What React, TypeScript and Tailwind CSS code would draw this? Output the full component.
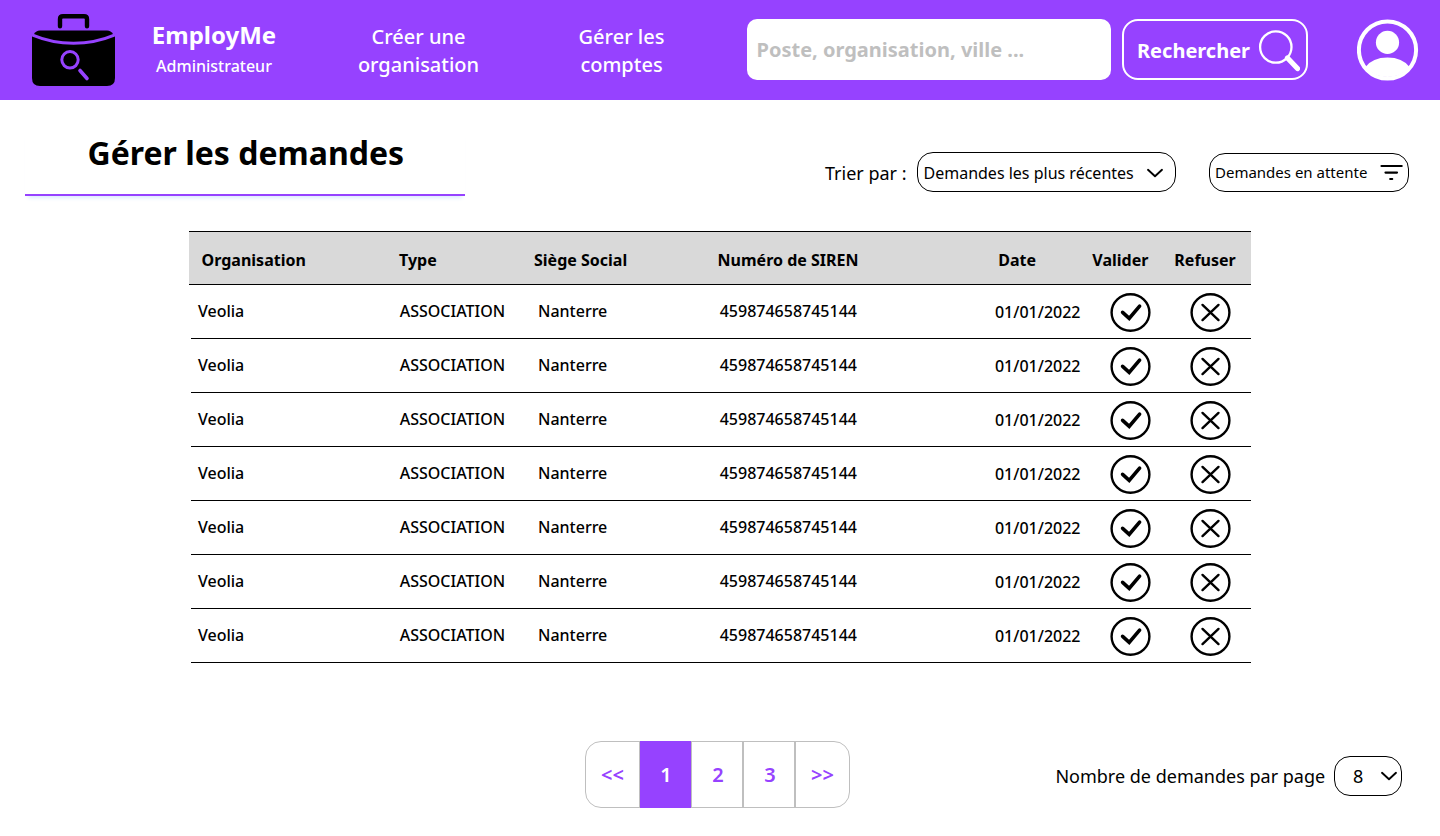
import React from "react";

const requests = Array.from({ length: 7 }, (_, id) => ({
  id,
  name: "Veolia",
  type: "ASSOCIATION",
  city: "Nanterre",
  siren: "459874658745144",
  date: "01/01/2022",
}));

function BriefcaseLogo() {
  return (
    <svg width="84" height="74" viewBox="0 0 84 74" fill="none">
      <path d="M28 13.2V6Q28 3.2 31 3.2H52Q55 3.2 55 6V13.2" stroke="#000" strokeWidth="4.4" strokeLinecap="round" />
      <path d="M2 21Q4 17.5 8 17.5H75Q79 17.5 81 21Q63 28.7 41.5 28.7Q20 28.7 2 21Z" fill="#000" />
      <path d="M0 23.5Q20 31.8 41.5 31.8Q63 31.8 83 23.5V65Q83 73 75 73H8Q0 73 0 65Z" fill="#000" />
      <circle cx="38" cy="46.8" r="8.2" stroke="#9642ff" strokeWidth="3" />
      <path d="M48 57.5L55 65.5" stroke="#9642ff" strokeWidth="3.6" strokeLinecap="round" />
    </svg>
  );
}

function SearchIcon() {
  return (
    <svg width="44" height="44" viewBox="0 0 44 44" fill="none" stroke="#fff">
      <circle cx="19.8" cy="19" r="15.7" strokeWidth="2.3" />
      <path d="M32 30.5L42 41" strokeWidth="5.2" strokeLinecap="round" transform="translate(-0.5 -0.5)" />
    </svg>
  );
}

function AvatarIcon() {
  return (
    <svg width="62" height="62" viewBox="0 0 62 62" fill="none">
      <circle cx="30.5" cy="31" r="28.6" stroke="#fff" strokeWidth="4" />
      <circle cx="30.5" cy="23.4" r="11.6" fill="#fff" />
      <path d="M8.5 48Q15.5 38.5 30.5 38.5Q45.5 38.5 52.5 48A29 29 0 0 1 8.5 48Z" fill="#fff" />
    </svg>
  );
}

function Chevron() {
  return (
    <svg width="18" height="12" viewBox="0 0 18 12" fill="none">
      <path d="M2 2.8L9 9.2L16 2.8" stroke="#000" strokeWidth="1.9" strokeLinecap="round" strokeLinejoin="round" />
    </svg>
  );
}

function FilterIcon() {
  return (
    <svg width="24" height="18" viewBox="0 0 24 18" stroke="#000" strokeWidth="2.2" strokeLinecap="round">
      <path d="M1.5 3H21.7M5.5 9.6H17M10.2 16H12.2" />
    </svg>
  );
}

function CheckIcon() {
  return (
    <svg width="42" height="40" viewBox="0 0 42 40" fill="none" stroke="#000">
      <ellipse cx="20.5" cy="19.5" rx="18.9" ry="18.3" strokeWidth="2.4" />
      <path d="M12.6 19.3L19.2 25.3L29.6 13.1" strokeWidth="3.6" strokeLinecap="round" />
    </svg>
  );
}

function CrossIcon() {
  return (
    <svg width="42" height="40" viewBox="0 0 42 40" fill="none" stroke="#000">
      <ellipse cx="20.5" cy="19.5" rx="18.9" ry="18.3" strokeWidth="2.4" />
      <path d="M12.5 11.9L28.5 27.1M28.5 11.9L12.5 27.1" strokeWidth="2.4" strokeLinecap="round" />
    </svg>
  );
}

function Header() {
  return (
    <header className="flex h-[100px] bg-[#9642ff] text-white">
      <div className="ml-8 mt-[13px] w-[84px]">
        <BriefcaseLogo />
      </div>
      <div className="ml-[34px] mt-[18px] w-32 text-center">
        <p className="text-2xl leading-[33px] font-bold">EmployMe</p>
        <p className="mt-1 text-base leading-[22px] font-medium">Administrateur</p>
      </div>
      <nav className="flex pt-[23px] text-center text-xl leading-7 font-medium">
        <a className="ml-[70px] w-[141px]">Créer une<br />organisation</a>
        <a className="ml-[62px] w-[141px]">Gérer les<br />comptes</a>
      </nav>
      <div className="ml-[55px] mt-[19.4px] flex h-[61px] w-[364px] items-center rounded-[10px] bg-white pl-[9.5px] text-xl font-bold text-[#bfbfbf]">
        <span className="pt-px">Poste, organisation, ville ...</span>
      </div>
      <button className="ml-[11px] mt-[19.4px] flex h-[61px] w-[186px] items-center rounded-2xl border-2 border-white pl-[13px] text-xl font-bold">
        <span className="w-[119px] pt-0.5 text-left">Rechercher</span>
        <SearchIcon />
      </button>
      <div className="ml-[48.5px] mt-[19px]">
        <AvatarIcon />
      </div>
    </header>
  );
}

function Toolbar() {
  return (
    <div className="flex h-[131px] text-black">
      <div className="ml-[25px] mt-[30px] h-[66px] w-[440px] border-b-2 border-[#9642ff] pl-[62.5px] shadow-[0_5px_4px_-3px_#dbe9ff]">
        <h1 className="text-[32px] leading-[45px] font-bold">Gérer les demandes</h1>
      </div>
      <div className="ml-[360px] mt-[52.4px] flex h-10 items-center">
        <span className="w-[91.5px] pt-0.5 text-lg">Trier par :</span>
        <div className="flex h-10 w-[259px] items-center rounded-2xl border border-black pl-1.5 text-base">
          <span className="w-[222px] pt-px">Demandes les plus récentes</span>
          <span className="pt-px"><Chevron /></span>
        </div>
        <div className="ml-[33.5px] flex h-[39px] w-[200px] items-center rounded-2xl border border-black pl-[5px] text-[15px]">
          <span className="w-[164.5px]">Demandes en attente</span>
          <FilterIcon />
        </div>
      </div>
    </div>
  );
}

function RequestTable() {
  return (
    <main className="ml-[189px] w-[1062px] text-base text-black">
      <div className="flex h-[54px] items-center border-y border-black bg-[#d9d9d9] pt-1 pl-[12.6px] font-bold">
        <span className="w-[197.4px]">Organisation</span>
        <span className="w-[135px]">Type</span>
        <span className="w-[183.6px]">Siège Social</span>
        <span className="w-[280.6px]">Numéro de SIREN</span>
        <span className="w-[94.2px]">Date</span>
        <span className="w-[82px]">Valider</span>
        <span>Refuser</span>
      </div>
      {requests.map((r) => (
        <div key={r.id} className="ml-0.5 flex h-[54px] items-center border-b border-black pl-[7px] font-medium">
          <span className="w-[201.7px] pb-0.5">{r.name}</span>
          <span className="w-[138.3px] pb-0.5">{r.type}</span>
          <span className="w-[181.7px] pb-0.5">{r.city}</span>
          <span className="w-[275.3px] pb-0.5">{r.siren}</span>
          <span className="w-[115px]">{r.date}</span>
          <span className="mt-[3px] w-20"><CheckIcon /></span>
          <span className="mt-[3px]"><CrossIcon /></span>
        </div>
      ))}
    </main>
  );
}

function Footer() {
  return (
    <footer className="mt-[78px] flex h-[67px] text-black">
      <div className="ml-[585px] flex h-[67px] w-[265px] rounded-2xl border border-[#bfbfbf] text-xl font-semibold text-[#9642ff]">
        <span className="flex w-[53px] items-center justify-center">&lt;&lt;</span>
        <span className="-my-px flex w-[53px] items-center justify-center border-x border-[#bfbfbf] bg-[#9642ff] pl-px text-white">1</span>
        <span className="flex w-[52px] items-center justify-center border-r-2 border-[#bfbfbf] pl-0.5">2</span>
        <span className="flex w-[52px] items-center justify-center border-r-2 border-[#bfbfbf] pl-0.5">3</span>
        <span className="flex w-[53px] items-center justify-center">&gt;&gt;</span>
      </div>
      <div className="ml-[205.4px] mt-[14.5px] flex h-10 items-center text-lg">
        <span className="w-[279px] pt-px whitespace-nowrap">Nombre de demandes par page</span>
        <div className="flex h-10 w-[68px] items-center rounded-2xl border border-black pl-[17.5px]">
          <span className="w-[27.5px] pt-px">8</span>
          <Chevron />
        </div>
      </div>
    </footer>
  );
}

export default function App() {
  return (
    <div className="h-[836px] w-[1440px] overflow-hidden bg-white font-['Noto_Sans',sans-serif]">
      <Header />
      <Toolbar />
      <RequestTable />
      <Footer />
    </div>
  );
}
